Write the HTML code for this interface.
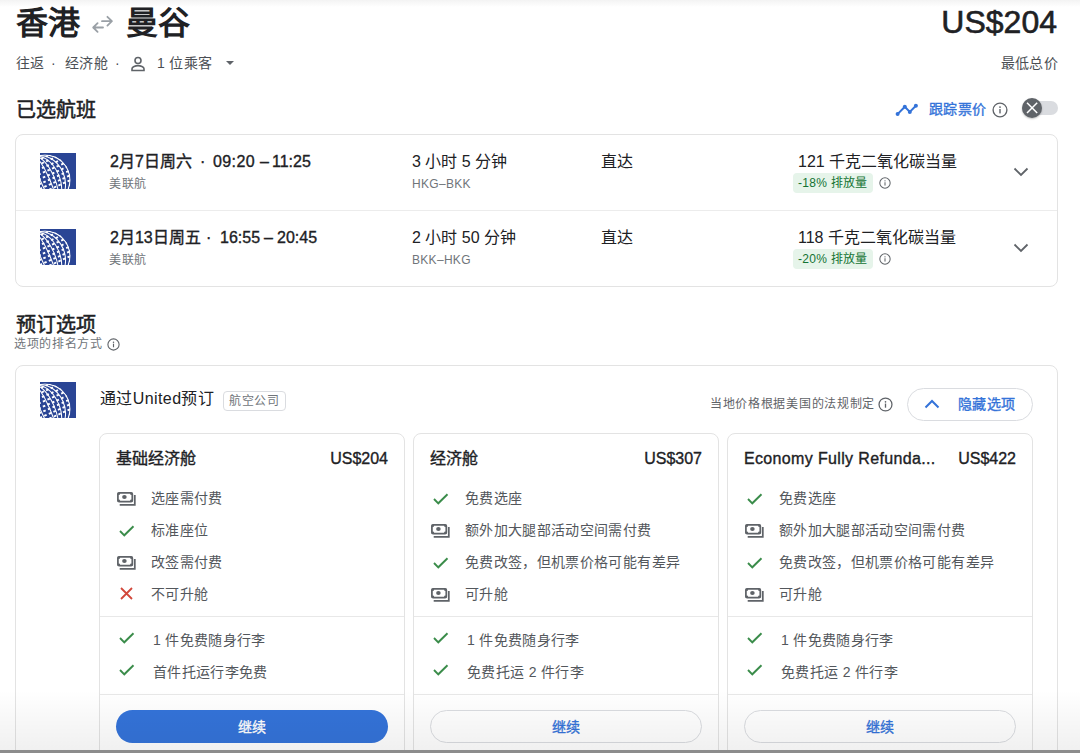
<!DOCTYPE html>
<html lang="zh-CN"><head><meta charset="utf-8">
<style>
*{box-sizing:border-box;margin:0;padding:0}
html,body{width:1080px;height:753px;overflow:hidden;background:#fff}
body{font-family:"Liberation Sans",sans-serif;color:#202124;position:relative}
.abs{position:absolute;white-space:nowrap}
.topshade{position:absolute;left:0;top:0;width:1080px;height:7px;background:linear-gradient(#f3f3f3,rgba(255,255,255,0))}
.botshade{position:absolute;left:0;top:690px;width:1080px;height:61px;background:linear-gradient(rgba(0,0,0,0),rgba(0,0,0,.06));z-index:5;pointer-events:none}
.botbar{position:absolute;left:0;top:750px;width:1080px;height:3px;background:#8c8c8c;z-index:6}
.title{top:1px;font-size:32px;font-weight:700;line-height:44px;color:#202124}
.price{right:23px;top:0px;font-size:32px;line-height:44px;color:#202124;-webkit-text-stroke:.6px #202124}
.sub{top:53px;font-size:14px;letter-spacing:.35px;line-height:20px;color:#4b4f54}
.h2{font-size:20px;line-height:28px;color:#202124;-webkit-text-stroke:0.5px currentColor}
.card{position:absolute;border:1px solid #e3e3e3;border-radius:8px;background:#fff}
.logo{position:absolute}
.t16{font-size:16px;line-height:22px;color:#202124}
.t12{font-size:12px;letter-spacing:.7px;line-height:16px;color:#70757a}
.badge{position:absolute;background:#e6f4ea;color:#137333;border-radius:4px;font-size:12px;letter-spacing:.3px;line-height:20px;height:20px;padding:0 5px}
.fare{position:absolute;top:433px;width:306px;height:340px;border:1px solid #e3e3e3;border-radius:8px;background:#fff}
.ft{position:absolute;font-size:14px;letter-spacing:.35px;line-height:20px;color:#53575c;white-space:nowrap}
.ic{position:absolute}
.div{position:absolute;left:0;width:304px;height:1px;background:#e8e8e8}
.btn{position:absolute;left:16px;top:276px;width:272px;height:33px;border-radius:16.5px;font-size:14px;letter-spacing:.35px;line-height:34px;text-align:center}
.med{-webkit-text-stroke:0.35px currentColor}
</style></head><body>
<div class="topshade"></div>
<div class="abs title" style="left:16px">香港</div>
<svg class="abs" style="left:88px;top:12px" width="30" height="24" viewBox="0 0 30 24"><path d="M14 9.2 H23.8 M19.4 4.8 L23.9 9.2 L19.4 13.6 M15 15.5 H5.3 M9.6 11.2 L5.2 15.5 L9.6 19.8" fill="none" stroke="#9aa0a6" stroke-width="1.8" stroke-linecap="round" stroke-linejoin="round"/></svg>
<div class="abs title" style="left:126px">曼谷</div>
<div class="abs price">US$204</div>
<div class="abs sub" style="left:16px">往返</div>
<div class="abs sub" style="left:51px">·</div>
<div class="abs sub" style="left:65px">经济舱</div>
<div class="abs sub" style="left:115px">·</div>
<svg class="abs" style="left:130px;top:56px" width="16" height="16" viewBox="0 0 16 16"><circle cx="8" cy="4.5" r="3" fill="none" stroke="#5f6368" stroke-width="1.6"/><path d="M2 14.5 V12.8 C2 10.8 5.5 9.6 8 9.6 C10.5 9.6 14 10.8 14 12.8 V14.5 Z" fill="none" stroke="#5f6368" stroke-width="1.6"/></svg>
<div class="abs sub" style="left:157px">1 位乘客</div>
<svg class="abs" style="left:225px;top:60px" width="10" height="6" viewBox="0 0 10 6"><path d="M1 1 H9 L5 5 Z" fill="#5f6368"/></svg>
<div class="abs sub" style="right:22px">最低总价</div>
<div class="abs h2" style="left:16px;top:96px">已选航班</div>
<svg class="abs" style="left:895px;top:102px" width="24" height="15" viewBox="0 0 24 15"><path d="M2.6 12.1 L9.8 4.7 L14.8 9.9 L20.9 3.8" fill="none" stroke="#3473d9" stroke-width="2"/><circle cx="2.6" cy="12.1" r="2" fill="#3473d9"/><circle cx="9.8" cy="4.7" r="2" fill="#3473d9"/><circle cx="14.8" cy="9.9" r="2" fill="#3473d9"/><circle cx="20.9" cy="3.8" r="2" fill="#3473d9"/></svg>
<div class="abs med" style="left:929px;top:99px;font-size:14px;letter-spacing:.35px;line-height:20px;color:#3473d9">跟踪票价</div>
<svg class="ic" style="left:992px;top:102px" width="16" height="16" viewBox="0 0 16 16"><circle cx="8" cy="8" r="6.9" fill="none" stroke="#5f6368" stroke-width="1.35"/><rect x="7.3" y="7" width="1.4" height="4.4" fill="#5f6368"/><circle cx="8" cy="5.1" r=".9" fill="#5f6368"/></svg>
<div class="abs" style="left:1022px;top:101px;width:36px;height:14px;border-radius:7px;background:#dadce0"></div>
<div class="abs" style="left:1022px;top:98px;width:20px;height:20px;border-radius:50%;background:#5f6368;box-shadow:0 1px 2px rgba(0,0,0,.25)"></div>
<svg class="abs" style="left:1022px;top:98px" width="20" height="20" viewBox="0 0 20 20"><path d="M5 4.8 L15.2 15 M15.2 4.8 L5 15" stroke="#fff" stroke-width="1.5"/></svg>
<svg width="0" height="0" style="position:absolute"><defs><clipPath id="gc"><circle cx="5" cy="27" r="25.6"/></clipPath></defs></svg>
<div class="card" style="left:15px;top:134px;width:1043px;height:153px"></div>
<div class="abs" style="left:16px;top:210px;width:1041px;height:1px;background:#ececec"></div>
<svg class="logo" style="left:40px;top:153px" width="36" height="36" viewBox="0 0 36 36"><rect width="36" height="36" fill="#2a4595"/><g clip-path="url(#gc)"><g transform="rotate(-24 5 27)" fill="none" stroke="#fff"><circle cx="5" cy="27" r="25" stroke-width="1.3"/><ellipse cx="5" cy="27" rx="19.5" ry="25" stroke-width="1.05"/><ellipse cx="5" cy="27" rx="14.5" ry="25" stroke-width="1.05"/><ellipse cx="5" cy="27" rx="9.5" ry="25" stroke-width="1.05"/><ellipse cx="5" cy="27" rx="4.5" ry="25" stroke-width="1.05"/><g stroke-width="1.9" stroke-dasharray="2.6 2.4"><path d="M-25 6 H40"/><path d="M-25 10.5 H40" stroke-dashoffset="1.5"/><path d="M-25 15 H40" stroke-dashoffset="3"/><path d="M-25 19.5 H40" stroke-dashoffset="4"/><path d="M-25 24 H40" stroke-dashoffset="1"/><path d="M-25 28.5 H40" stroke-dashoffset="2.5"/><path d="M-25 33 H40" stroke-dashoffset="3.5"/><path d="M-25 37.5 H40"/></g></g></g></svg>
<div class="abs t16 med" style="left:110px;top:151px">2月7日周六</div>
<div class="abs t16 med" style="left:200px;top:151px">·</div>
<div class="abs t16 med" style="left:213px;top:151px;letter-spacing:.4px">09:20</div>
<div class="abs t16 med" style="left:260px;top:151px">–</div>
<div class="abs t16 med" style="left:272px;top:151px">11:25</div>
<div class="abs t12" style="left:109px;top:176px">美联航</div>
<div class="abs t16" style="left:412px;top:151px">3 小时 5 分钟</div>
<div class="abs t12" style="left:412px;top:176px;letter-spacing:.3px">HKG–BKK</div>
<div class="abs t16" style="left:601px;top:151px">直达</div>
<div class="abs t16" style="left:798px;top:151px">121 千克二氧化碳当量</div>
<div class="abs badge" style="left:793px;top:173px">-18% 排放量</div>
<svg class="ic" style="left:879px;top:177px" width="12" height="12" viewBox="0 0 16 16"><circle cx="8" cy="8" r="6.9" fill="none" stroke="#5f6368" stroke-width="1.35"/><rect x="7.3" y="7" width="1.4" height="4.4" fill="#5f6368"/><circle cx="8" cy="5.1" r=".9" fill="#5f6368"/></svg>
<svg class="ic" style="left:1013px;top:167px" width="16" height="10" viewBox="0 0 16 10"><path d="M1.5 1.5 L8 8 L14.5 1.5" fill="none" stroke="#5f6368" stroke-width="1.8"/></svg>
<svg class="logo" style="left:40px;top:229px" width="36" height="36" viewBox="0 0 36 36"><rect width="36" height="36" fill="#2a4595"/><g clip-path="url(#gc)"><g transform="rotate(-24 5 27)" fill="none" stroke="#fff"><circle cx="5" cy="27" r="25" stroke-width="1.3"/><ellipse cx="5" cy="27" rx="19.5" ry="25" stroke-width="1.05"/><ellipse cx="5" cy="27" rx="14.5" ry="25" stroke-width="1.05"/><ellipse cx="5" cy="27" rx="9.5" ry="25" stroke-width="1.05"/><ellipse cx="5" cy="27" rx="4.5" ry="25" stroke-width="1.05"/><g stroke-width="1.9" stroke-dasharray="2.6 2.4"><path d="M-25 6 H40"/><path d="M-25 10.5 H40" stroke-dashoffset="1.5"/><path d="M-25 15 H40" stroke-dashoffset="3"/><path d="M-25 19.5 H40" stroke-dashoffset="4"/><path d="M-25 24 H40" stroke-dashoffset="1"/><path d="M-25 28.5 H40" stroke-dashoffset="2.5"/><path d="M-25 33 H40" stroke-dashoffset="3.5"/><path d="M-25 37.5 H40"/></g></g></g></svg>
<div class="abs t16 med" style="left:110px;top:227px">2月13日周五</div>
<div class="abs t16 med" style="left:206px;top:227px">·</div>
<div class="abs t16 med" style="left:220px;top:227px;letter-spacing:0">16:55</div>
<div class="abs t16 med" style="left:264px;top:227px">–</div>
<div class="abs t16 med" style="left:277px;top:227px">20:45</div>
<div class="abs t12" style="left:109px;top:252px">美联航</div>
<div class="abs t16" style="left:412px;top:227px">2 小时 50 分钟</div>
<div class="abs t12" style="left:412px;top:252px;letter-spacing:.3px">BKK–HKG</div>
<div class="abs t16" style="left:601px;top:227px">直达</div>
<div class="abs t16" style="left:798px;top:227px">118 千克二氧化碳当量</div>
<div class="abs badge" style="left:793px;top:249px">-20% 排放量</div>
<svg class="ic" style="left:879px;top:253px" width="12" height="12" viewBox="0 0 16 16"><circle cx="8" cy="8" r="6.9" fill="none" stroke="#5f6368" stroke-width="1.35"/><rect x="7.3" y="7" width="1.4" height="4.4" fill="#5f6368"/><circle cx="8" cy="5.1" r=".9" fill="#5f6368"/></svg>
<svg class="ic" style="left:1013px;top:243px" width="16" height="10" viewBox="0 0 16 10"><path d="M1.5 1.5 L8 8 L14.5 1.5" fill="none" stroke="#5f6368" stroke-width="1.8"/></svg>
<div class="abs h2" style="left:16px;top:311px">预订选项</div>
<div class="abs t12" style="left:14px;top:336px">选项的排名方式</div>
<svg class="ic" style="left:107px;top:338px" width="13" height="13" viewBox="0 0 16 16"><circle cx="8" cy="8" r="6.9" fill="none" stroke="#5f6368" stroke-width="1.35"/><rect x="7.3" y="7" width="1.4" height="4.4" fill="#5f6368"/><circle cx="8" cy="5.1" r=".9" fill="#5f6368"/></svg>
<div class="card" style="left:15px;top:365px;width:1043px;height:420px"></div>
<svg class="logo" style="left:40px;top:382px" width="36" height="36" viewBox="0 0 36 36"><rect width="36" height="36" fill="#2a4595"/><g clip-path="url(#gc)"><g transform="rotate(-24 5 27)" fill="none" stroke="#fff"><circle cx="5" cy="27" r="25" stroke-width="1.3"/><ellipse cx="5" cy="27" rx="19.5" ry="25" stroke-width="1.05"/><ellipse cx="5" cy="27" rx="14.5" ry="25" stroke-width="1.05"/><ellipse cx="5" cy="27" rx="9.5" ry="25" stroke-width="1.05"/><ellipse cx="5" cy="27" rx="4.5" ry="25" stroke-width="1.05"/><g stroke-width="1.9" stroke-dasharray="2.6 2.4"><path d="M-25 6 H40"/><path d="M-25 10.5 H40" stroke-dashoffset="1.5"/><path d="M-25 15 H40" stroke-dashoffset="3"/><path d="M-25 19.5 H40" stroke-dashoffset="4"/><path d="M-25 24 H40" stroke-dashoffset="1"/><path d="M-25 28.5 H40" stroke-dashoffset="2.5"/><path d="M-25 33 H40" stroke-dashoffset="3.5"/><path d="M-25 37.5 H40"/></g></g></g></svg>
<div class="abs t16" style="left:100px;top:388px;letter-spacing:.4px">通过United预订</div>
<div class="abs t12" style="left:223px;top:391px;height:20px;border:1px solid #dadce0;border-radius:4px;padding:0 5px;line-height:18px">航空公司</div>
<div class="abs t12" style="left:710px;top:396px;color:#5f6368">当地价格根据美国的法规制定</div>
<svg class="ic" style="left:878px;top:397px" width="15" height="15" viewBox="0 0 16 16"><circle cx="8" cy="8" r="6.9" fill="none" stroke="#5f6368" stroke-width="1.35"/><rect x="7.3" y="7" width="1.4" height="4.4" fill="#5f6368"/><circle cx="8" cy="5.1" r=".9" fill="#5f6368"/></svg>
<div class="abs" style="left:907px;top:388px;width:126px;height:33px;border:1px solid #dadce0;border-radius:17px"></div>
<svg class="ic" style="left:924px;top:399px" width="16" height="10" viewBox="0 0 16 10"><path d="M1.5 8.5 L8 2 L14.5 8.5" fill="none" stroke="#3473d9" stroke-width="2"/></svg>
<div class="abs med" style="left:958px;top:394px;font-size:14px;letter-spacing:.35px;line-height:20px;color:#3473d9">隐藏选项</div>
<div class="fare" style="left:99px"><div class="abs t16 med" style="left:16px;top:14px">基础经济舱</div><div class="abs t16 med" style="right:16px;top:14px">US$204</div><svg class="ic" style="left:16px;top:57px" width="21" height="16" viewBox="0 0 21 16"><rect x="1.9" y="1.9" width="14.4" height="8.8" rx="1.2" fill="none" stroke="#5f6368" stroke-width="1.75"/><g fill="#5f6368"><circle cx="2.8" cy="2.8" r="1.3"/><circle cx="15.4" cy="2.8" r="1.3"/><circle cx="2.8" cy="9.8" r="1.3"/><circle cx="15.4" cy="9.8" r="1.3"/><ellipse cx="8.4" cy="6" rx="2.3" ry="2"/></g><path d="M3.7 13.8 H18.8 V4" fill="none" stroke="#5f6368" stroke-width="1.75"/></svg><div class="ft" style="left:51px;top:54px">选座需付费</div><svg class="ic" style="left:19px;top:91px" width="16" height="12" viewBox="0 0 16 12"><path d="M1 6 L5.3 10.3 L14.5 1.2" fill="none" stroke="#3a8c4a" stroke-width="1.9"/></svg><div class="ft" style="left:51px;top:86px">标准座位</div><svg class="ic" style="left:16px;top:121px" width="21" height="16" viewBox="0 0 21 16"><rect x="1.9" y="1.9" width="14.4" height="8.8" rx="1.2" fill="none" stroke="#5f6368" stroke-width="1.75"/><g fill="#5f6368"><circle cx="2.8" cy="2.8" r="1.3"/><circle cx="15.4" cy="2.8" r="1.3"/><circle cx="2.8" cy="9.8" r="1.3"/><circle cx="15.4" cy="9.8" r="1.3"/><ellipse cx="8.4" cy="6" rx="2.3" ry="2"/></g><path d="M3.7 13.8 H18.8 V4" fill="none" stroke="#5f6368" stroke-width="1.75"/></svg><div class="ft" style="left:51px;top:118px">改签需付费</div><svg class="ic" style="left:20px;top:153px" width="13" height="13" viewBox="0 0 13 13"><path d="M1 1 L12 12 M12 1 L1 12" fill="none" stroke="#d2473a" stroke-width="1.8"/></svg><div class="ft" style="left:51px;top:150px">不可升舱</div><div class="div" style="top:182px"></div><svg class="ic" style="left:19px;top:198px" width="16" height="12" viewBox="0 0 16 12"><path d="M1 6 L5.3 10.3 L14.5 1.2" fill="none" stroke="#3a8c4a" stroke-width="1.9"/></svg><div class="ft" style="left:53px;top:196px">1 件免费随身行李</div><svg class="ic" style="left:19px;top:230px" width="16" height="12" viewBox="0 0 16 12"><path d="M1 6 L5.3 10.3 L14.5 1.2" fill="none" stroke="#3a8c4a" stroke-width="1.9"/></svg><div class="ft" style="left:53px;top:228px">首件托运行李免费</div><div class="div" style="top:260px"></div><div class="btn med" style="background:#3473d9;color:#fff">继续</div></div>
<div class="fare" style="left:413px"><div class="abs t16 med" style="left:16px;top:14px">经济舱</div><div class="abs t16 med" style="right:16px;top:14px">US$307</div><svg class="ic" style="left:19px;top:59px" width="16" height="12" viewBox="0 0 16 12"><path d="M1 6 L5.3 10.3 L14.5 1.2" fill="none" stroke="#3a8c4a" stroke-width="1.9"/></svg><div class="ft" style="left:51px;top:54px">免费选座</div><svg class="ic" style="left:16px;top:89px" width="21" height="16" viewBox="0 0 21 16"><rect x="1.9" y="1.9" width="14.4" height="8.8" rx="1.2" fill="none" stroke="#5f6368" stroke-width="1.75"/><g fill="#5f6368"><circle cx="2.8" cy="2.8" r="1.3"/><circle cx="15.4" cy="2.8" r="1.3"/><circle cx="2.8" cy="9.8" r="1.3"/><circle cx="15.4" cy="9.8" r="1.3"/><ellipse cx="8.4" cy="6" rx="2.3" ry="2"/></g><path d="M3.7 13.8 H18.8 V4" fill="none" stroke="#5f6368" stroke-width="1.75"/></svg><div class="ft" style="left:51px;top:86px">额外加大腿部活动空间需付费</div><svg class="ic" style="left:19px;top:123px" width="16" height="12" viewBox="0 0 16 12"><path d="M1 6 L5.3 10.3 L14.5 1.2" fill="none" stroke="#3a8c4a" stroke-width="1.9"/></svg><div class="ft" style="left:51px;top:118px">免费改签，但机票价格可能有差异</div><svg class="ic" style="left:16px;top:153px" width="21" height="16" viewBox="0 0 21 16"><rect x="1.9" y="1.9" width="14.4" height="8.8" rx="1.2" fill="none" stroke="#5f6368" stroke-width="1.75"/><g fill="#5f6368"><circle cx="2.8" cy="2.8" r="1.3"/><circle cx="15.4" cy="2.8" r="1.3"/><circle cx="2.8" cy="9.8" r="1.3"/><circle cx="15.4" cy="9.8" r="1.3"/><ellipse cx="8.4" cy="6" rx="2.3" ry="2"/></g><path d="M3.7 13.8 H18.8 V4" fill="none" stroke="#5f6368" stroke-width="1.75"/></svg><div class="ft" style="left:51px;top:150px">可升舱</div><div class="div" style="top:182px"></div><svg class="ic" style="left:19px;top:198px" width="16" height="12" viewBox="0 0 16 12"><path d="M1 6 L5.3 10.3 L14.5 1.2" fill="none" stroke="#3a8c4a" stroke-width="1.9"/></svg><div class="ft" style="left:53px;top:196px">1 件免费随身行李</div><svg class="ic" style="left:19px;top:230px" width="16" height="12" viewBox="0 0 16 12"><path d="M1 6 L5.3 10.3 L14.5 1.2" fill="none" stroke="#3a8c4a" stroke-width="1.9"/></svg><div class="ft" style="left:53px;top:228px">免费托运 2 件行李</div><div class="div" style="top:260px"></div><div class="btn med" style="border:1px solid #dadce0;color:#3473d9;line-height:32px">继续</div></div>
<div class="fare" style="left:727px"><div class="abs t16 med" style="left:16px;top:14px"><span style="letter-spacing:.35px">Economy Fully Refunda...</span></div><div class="abs t16 med" style="right:16px;top:14px">US$422</div><svg class="ic" style="left:19px;top:59px" width="16" height="12" viewBox="0 0 16 12"><path d="M1 6 L5.3 10.3 L14.5 1.2" fill="none" stroke="#3a8c4a" stroke-width="1.9"/></svg><div class="ft" style="left:51px;top:54px">免费选座</div><svg class="ic" style="left:16px;top:89px" width="21" height="16" viewBox="0 0 21 16"><rect x="1.9" y="1.9" width="14.4" height="8.8" rx="1.2" fill="none" stroke="#5f6368" stroke-width="1.75"/><g fill="#5f6368"><circle cx="2.8" cy="2.8" r="1.3"/><circle cx="15.4" cy="2.8" r="1.3"/><circle cx="2.8" cy="9.8" r="1.3"/><circle cx="15.4" cy="9.8" r="1.3"/><ellipse cx="8.4" cy="6" rx="2.3" ry="2"/></g><path d="M3.7 13.8 H18.8 V4" fill="none" stroke="#5f6368" stroke-width="1.75"/></svg><div class="ft" style="left:51px;top:86px">额外加大腿部活动空间需付费</div><svg class="ic" style="left:19px;top:123px" width="16" height="12" viewBox="0 0 16 12"><path d="M1 6 L5.3 10.3 L14.5 1.2" fill="none" stroke="#3a8c4a" stroke-width="1.9"/></svg><div class="ft" style="left:51px;top:118px">免费改签，但机票价格可能有差异</div><svg class="ic" style="left:16px;top:153px" width="21" height="16" viewBox="0 0 21 16"><rect x="1.9" y="1.9" width="14.4" height="8.8" rx="1.2" fill="none" stroke="#5f6368" stroke-width="1.75"/><g fill="#5f6368"><circle cx="2.8" cy="2.8" r="1.3"/><circle cx="15.4" cy="2.8" r="1.3"/><circle cx="2.8" cy="9.8" r="1.3"/><circle cx="15.4" cy="9.8" r="1.3"/><ellipse cx="8.4" cy="6" rx="2.3" ry="2"/></g><path d="M3.7 13.8 H18.8 V4" fill="none" stroke="#5f6368" stroke-width="1.75"/></svg><div class="ft" style="left:51px;top:150px">可升舱</div><div class="div" style="top:182px"></div><svg class="ic" style="left:19px;top:198px" width="16" height="12" viewBox="0 0 16 12"><path d="M1 6 L5.3 10.3 L14.5 1.2" fill="none" stroke="#3a8c4a" stroke-width="1.9"/></svg><div class="ft" style="left:53px;top:196px">1 件免费随身行李</div><svg class="ic" style="left:19px;top:230px" width="16" height="12" viewBox="0 0 16 12"><path d="M1 6 L5.3 10.3 L14.5 1.2" fill="none" stroke="#3a8c4a" stroke-width="1.9"/></svg><div class="ft" style="left:53px;top:228px">免费托运 2 件行李</div><div class="div" style="top:260px"></div><div class="btn med" style="border:1px solid #dadce0;color:#3473d9;line-height:32px">继续</div></div>
<div class="botshade"></div><div class="botbar"></div>
</body></html>
